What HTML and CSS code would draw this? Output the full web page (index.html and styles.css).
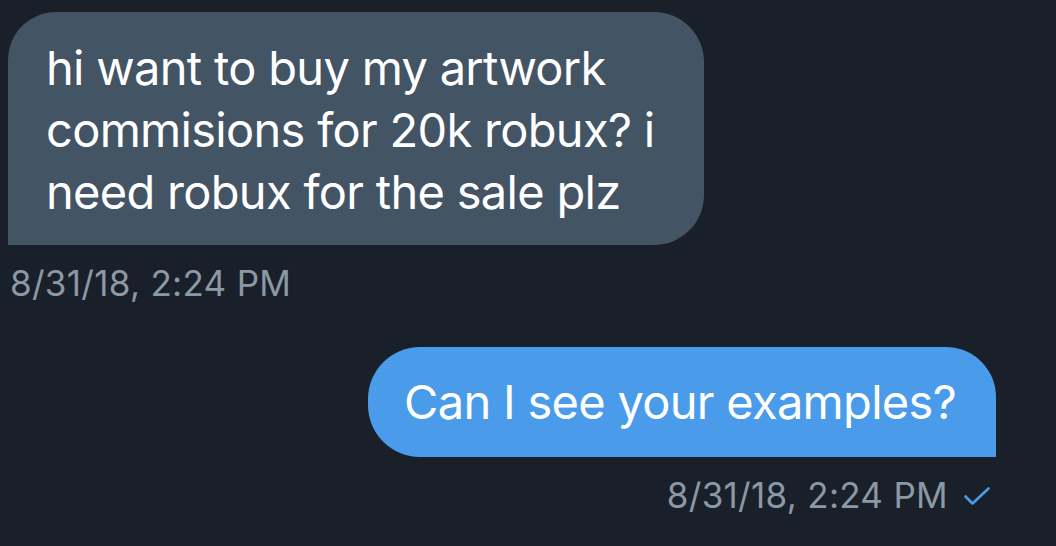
FILE: index.html
```html
<!DOCTYPE html>
<html lang="en">
<head>
  <meta charset="UTF-8">
  <meta name="viewport" content="width=device-width, initial-scale=1.0">
  <title>Messages</title>
  <link rel="stylesheet" href="styles.css">
</head>
<body>

  <!-- Conversation -->
  <div class="chat">
    <div class="message received">
      <div class="bubble">hi want to buy my artwork commisions for 20k robux? i need robux for the sale plz</div>
      <div class="meta">8/31/18, 2:24 PM</div>
    </div>

    <div class="message sent">
      <div class="bubble">Can I see your examples?</div>
      <div class="meta">
        <span>8/31/18, 2:24 PM</span>
        <svg class="check" width="26" height="18" viewBox="0 0 26 18">
          <path d="M1.5 9.5 L8.5 16.5 L24.5 1.5" fill="none" stroke="#4a9be9" stroke-width="2.6" stroke-linecap="round" stroke-linejoin="round"/>
        </svg>
      </div>
    </div>
  </div>

</body>
</html>
```

FILE: styles.css
```css
/* General Body Styling */
body {
  margin: 0;
  padding: 0;
  font-family: 'Inter', 'Liberation Sans', sans-serif;
  background-color: #19202a;
  color: #ffffff;
  height: 100vh;
  overflow: hidden;
}

.chat {
  display: flex;
  flex-direction: column;
  padding: 12px 0 0 8px;
}

.message {
  display: flex;
  flex-direction: column;
}

.bubble {
  font-size: 47px;
  line-height: 62px;
  letter-spacing: -0.7px;
  padding: 24px 38px;
}

.meta {
  font-size: 35px;
  letter-spacing: 0.3px;
  color: #8b98a5;
  line-height: 40px;
}

/* Received */
.received {
  align-items: flex-start;
}

.received .bubble {
  background-color: #435465;
  border-radius: 48px 50px 50px 0;
  width: 620px;
  padding-top: 25px;
  padding-bottom: 22px;
}

.received .meta {
  margin-top: 18px;
  padding-left: 2px;
}

/* Sent */
.sent {
  align-items: flex-end;
  margin-top: 44px;
  margin-right: 60px;
}

.sent .bubble {
  background-color: #4a9be9;
  border-radius: 52px 50px 0 52px;
  padding-left: 36px;
  padding-right: 40px;
}

.sent .meta {
  display: flex;
  align-items: center;
  gap: 16px;
  margin-top: 18px;
  margin-right: 6px;
}

.check {
  margin-top: 2px;
}
```
